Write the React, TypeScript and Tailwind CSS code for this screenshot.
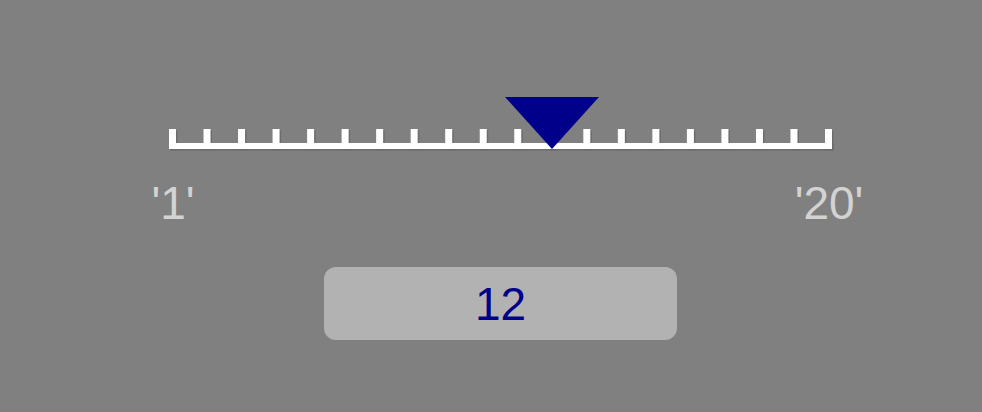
import React from "react";

export default function App() {
  const ticks = Array.from({ length: 20 }, (_, i) => 169 + i * ((832 - 7 - 169) / 19));
  return (
    <div
      className="w-full h-[412px] bg-[#808080] flex flex-col items-center pl-[19px] pt-[95px]"
      style={{ fontFamily: '"Liberation Sans", Arial, sans-serif' }}
    >
      <svg width={683} height={58} viewBox="159 95 683 58" className="block">
        <g fill="#6c6c6c" transform="translate(1.5 1.5)">
          <rect x={169} y={143} width={663} height={6} />
          {ticks.map((x, i) => (
            <rect key={i} x={x} y={129} width={7} height={20} />
          ))}
        </g>
        <g fill="#ffffff">
          <rect x={169} y={143} width={663} height={6} />
          {ticks.map((x, i) => (
            <rect key={i} x={x} y={129} width={7} height={20} />
          ))}
        </g>
        <polygon points="505,97 599,97 552,149" fill="#00008b" />
      </svg>
      <div className="w-[683px] mt-[27px] flex justify-between text-[46px] leading-[46px] text-[#d3d3d3]">
        <div className="w-[28px] flex justify-center whitespace-nowrap">'1'</div>
        <div className="w-[26px] flex justify-center whitespace-nowrap">'20'</div>
      </div>
      <div className="mt-[41px] w-[353px] h-[73px] rounded-xl bg-[#b2b2b2] flex items-center justify-center text-[46px] leading-[46px] text-[#00008b]">
        12
      </div>
    </div>
  );
}
